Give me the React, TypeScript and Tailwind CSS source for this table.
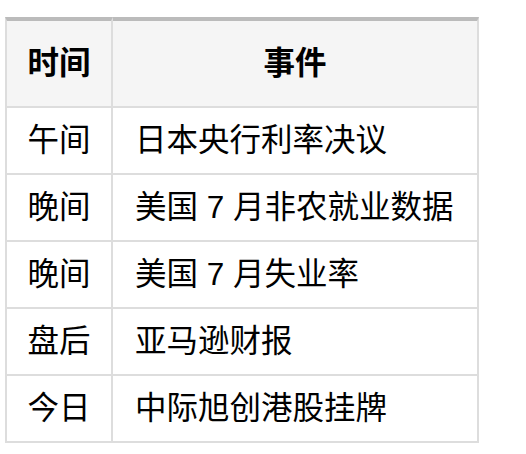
const rows: [string, string][] = [
  ["午间", "日本央行利率决议"],
  ["晚间", "美国 7 月非农就业数据"],
  ["晚间", "美国 7 月失业率"],
  ["盘后", "亚马逊财报"],
  ["今日", "中际旭创港股挂牌"],
];

export default function App() {
  return (
    <div className="min-h-[454px] bg-white pl-[5px] pt-[17px] text-[31.5px] text-black [font-family:'Liberation_Sans','Noto_Sans_CJK_SC',sans-serif]">
      <table className="w-[474px] table-fixed border-separate border-spacing-0">
        <colgroup>
          <col className="w-[108px]" />
          <col className="w-[366px]" />
        </colgroup>
        <thead>
          <tr className="bg-[#f5f5f5]">
            <th className="h-[91px] border-t-4 border-r-2 border-b-2 border-l-2 border-t-[#bbbbbb] border-r-[#dddddd] border-b-[#dddddd] border-l-[#dddddd] p-0 text-center font-bold">
              时间
            </th>
            <th className="h-[91px] border-t-4 border-r-2 border-b-2 border-t-[#bbbbbb] border-r-[#dddddd] border-b-[#dddddd] p-0 text-center font-bold">
              事件
            </th>
          </tr>
        </thead>
        <tbody>
          {rows.map(([time, event], i) => (
            <tr key={i}>
              <td className="h-[67px] border-r-2 border-b-2 border-l-2 border-[#dddddd] p-0 text-center">
                {time}
              </td>
              <td className="h-[67px] border-r-2 border-b-2 border-[#dddddd] p-0 pl-[22px] whitespace-nowrap">
                {event}
              </td>
            </tr>
          ))}
        </tbody>
      </table>
    </div>
  );
}
